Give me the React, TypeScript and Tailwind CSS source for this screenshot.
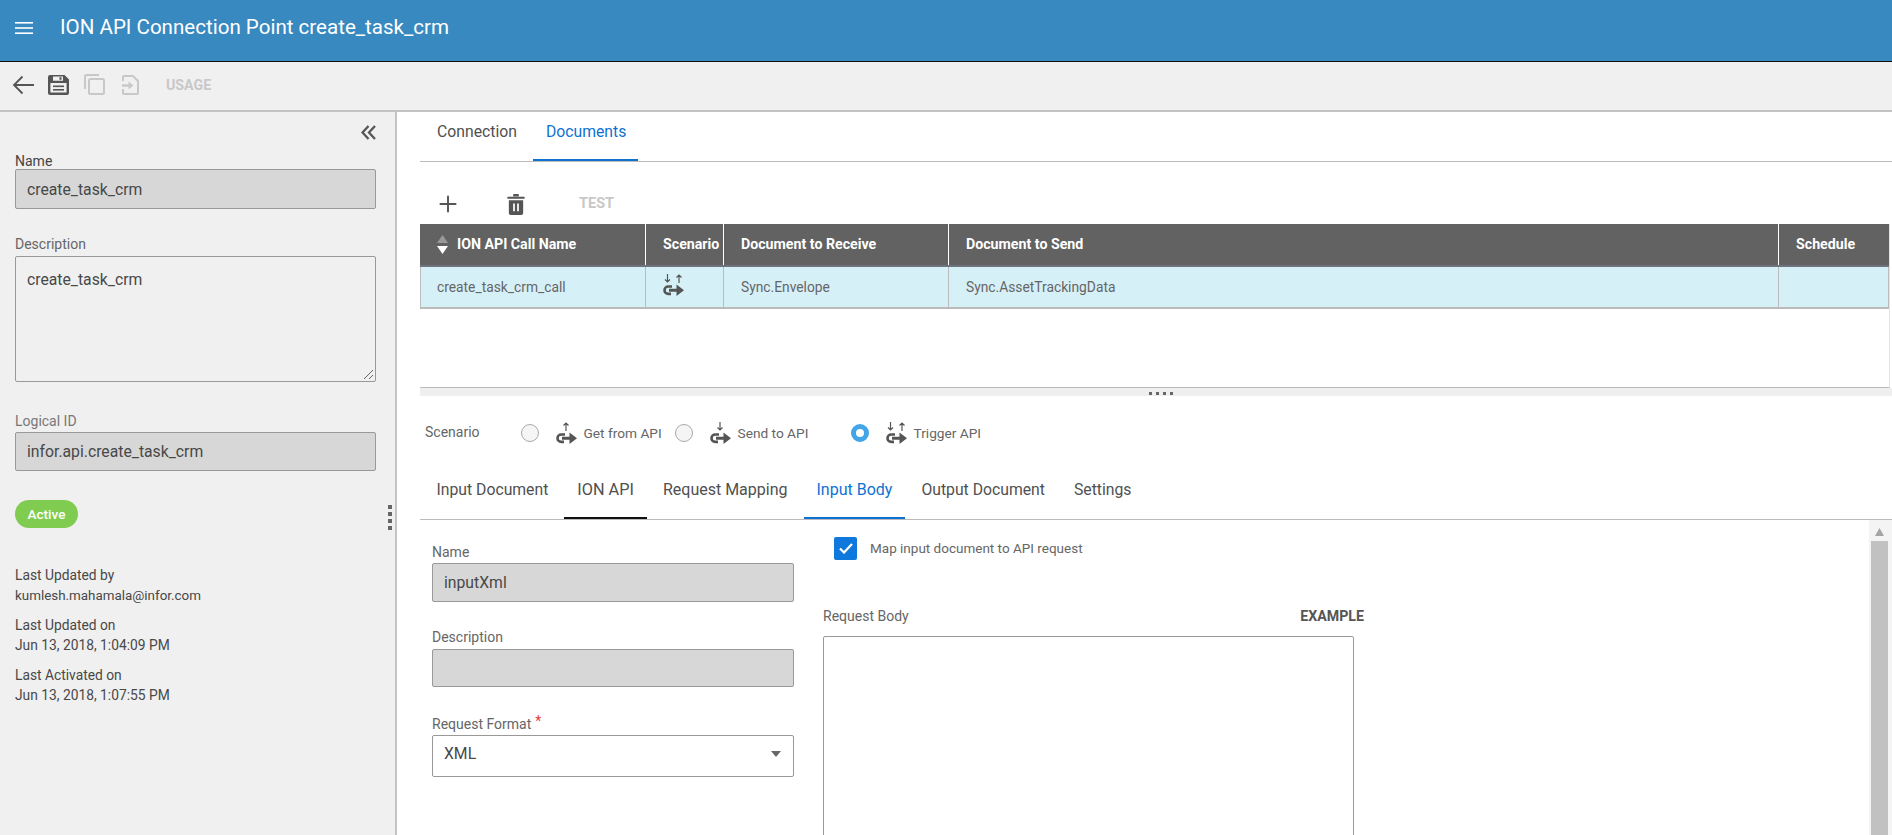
import { Plus } from "lucide-react";

const font = "font-['Roboto',sans-serif]";

function MenuIcon() {
	return (
		<svg width="18" height="12" viewBox="0 0 18 12" fill="#fff">
			<rect x="0" y="0" width="18" height="1.6" />
			<rect x="0" y="5.2" width="18" height="1.6" />
			<rect x="0" y="10.4" width="18" height="1.6" />
		</svg>
	);
}

function BackIcon() {
	return (
		<svg width="22" height="20" viewBox="0 0 22 20" fill="none" stroke="#555" strokeWidth="1.8">
			<path d="M22 10H2M10.5 1.5 2 10l8.5 8.5" />
		</svg>
	);
}

function SaveIcon() {
	return (
		<svg width="21" height="20" viewBox="0 0 21 20" fill="none">
			<path
				fillRule="evenodd"
				fill="#555"
				d="M2 0h14.5L21 4.5V18a2 2 0 0 1-2 2H2a2 2 0 0 1-2-2V2a2 2 0 0 1 2-2zM5 1.6v4.2h10V1.6H5zM2.4 8v9.6h16.2V8H2.4z"
			/>
			<rect x="5" y="10.5" width="11" height="1.6" fill="#555" />
			<rect x="5" y="14" width="11" height="1.6" fill="#555" />
			<rect x="11.5" y="2.2" width="2" height="2.6" fill="#555" />
		</svg>
	);
}

function CopyIcon() {
	return (
		<svg width="21" height="21" viewBox="0 0 21 21" fill="none" stroke="#c8c8c8" strokeWidth="2">
			<path d="M1 15V2.5A1.5 1.5 0 0 1 2.5 1H15" />
			<rect x="5" y="5" width="15" height="15" rx="1.5" />
		</svg>
	);
}

function ImportIcon() {
	return (
		<svg width="17" height="20" viewBox="0 0 17 20" fill="none" stroke="#c8c8c8" strokeWidth="2">
			<path d="M1 6V2a1 1 0 0 1 1-1h9l5 5v12a1 1 0 0 1-1 1H2a1 1 0 0 1-1-1v-4" />
			<path d="M0 10.5h7" strokeWidth="2.4" />
			<path d="M6.5 6.5l5 4-5 4z" fill="#c8c8c8" stroke="none" />
		</svg>
	);
}

function CollapseIcon() {
	return (
		<svg width="15" height="15" viewBox="0 0 15 15" fill="none" stroke="#555" strokeWidth="2.3">
			<path d="M7.5 1 1.5 7.5l6 6.5M14 1 8 7.5l6 6.5" />
		</svg>
	);
}

function TrashIcon() {
	return (
		<svg width="18" height="21" viewBox="0 0 18 22" fill="#555">
			<rect x="0" y="3" width="18" height="2" rx="0.5" />
			<rect x="6" y="0" width="6" height="2.5" rx="0.5" />
			<path
				fillRule="evenodd"
				d="M1.5 6.5h15V20a2 2 0 0 1-2 2h-11a2 2 0 0 1-2-2V6.5zM6 10v8h1.8v-8H6zm4.2 0v8H12v-8h-1.8z"
			/>
		</svg>
	);
}

// plug shape with arrow, shared by the three scenario icons
function ScenarioIcon({ mode }: { mode: "get" | "send" | "trigger" }) {
	return (
		<svg width="21" height="22" viewBox="0 0 21 22" fill="none">
			<g stroke="#555" strokeWidth="1.2">
				{mode === "get" && <path d="M10 9V1M7.5 3.5 10 1l2.5 2.5" />}
				{mode === "send" && <path d="M10 0v8M7.5 5.5 10 8l2.5-2.5" />}
				{mode === "trigger" && <path d="M4.5 0v8M2 5.5 4.5 8 7 5.5M16 9V1M13.5 3.5 16 1l2.5 2.5" />}
			</g>
			<path d="M9 12.5H5.2a3.7 3.7 0 0 0 0 7.4H8" stroke="#555" strokeWidth="2.6" />
			<path d="M6 14.7h7.5v-4.2l7.5 5.7-7.5 5.8v-4.3H6z" fill="#555" />
		</svg>
	);
}

function Field({ label, value, labelClass }: { label: string; value: string; labelClass?: string }) {
	return (
		<div className="flex flex-col">
			<label className={`text-[14px] leading-[16px] ${labelClass ?? "text-[#666]"}`}>{label}</label>
			<div className="mt-[3px] flex h-[39px] items-center rounded-[2px] border border-[#999] bg-[#d7d7d7] px-[11px] text-[15.75px] text-[#484848]">
				{value}
			</div>
		</div>
	);
}

function Tab({ label, state, size = "text-[15.75px]" }: { label: string; state?: "active" | "current"; size?: string }) {
	const line =
		state === "active"
			? "border-[#0f72d2] text-[#0f72d2]"
			: state === "current"
				? "border-[#111] text-[#505050]"
				: "border-transparent text-[#505050]";
	return <div className={`mx-[1.5px] flex h-full items-center border-b-[2px] px-[13px] pb-[4px] ${size} ${line}`}>{label}</div>;
}

function Radio({ checked }: { checked?: boolean }) {
	return checked ? (
		<span className="box-border h-[18px] w-[18px] rounded-full border-[5px] border-[#42a5e8] bg-white" />
	) : (
		<span className="box-border h-[18px] w-[18px] rounded-full border border-[#aaa] bg-[#f5f5f5]" />
	);
}

function Scenario({ mode, label, checked, width }: { mode: "get" | "send" | "trigger"; label: string; checked?: boolean; width: string }) {
	return (
		<div className={`flex items-center ${width}`}>
			<Radio checked={checked} />
			<span className="ml-[17px]">
				<ScenarioIcon mode={mode} />
			</span>
			<span className="ml-[7px] whitespace-nowrap text-[13.7px] text-[#666]">{label}</span>
		</div>
	);
}

export default function App() {
	return (
		<div className={`flex h-[835px] w-[1892px] flex-col overflow-hidden bg-white ${font}`}>
			{/* Header */}
			<header className="flex h-[62px] shrink-0 items-center border-b border-b-[#111] bg-[#3889c0] pb-[6px] pl-[15px] text-white">
				<MenuIcon />
				<h1 className="ml-[27px] text-[20.55px] font-normal">ION API Connection Point create_task_crm</h1>
			</header>

			{/* Toolbar */}
			<div className="flex h-[50px] shrink-0 items-center border-b-[2px] border-b-[#c4c4c4] bg-[#f0f0f0] pl-[12px] pb-[3px]">
				<BackIcon />
				<span className="ml-[14px]"><SaveIcon /></span>
				<span className="ml-[15px]"><CopyIcon /></span>
				<span className="ml-[17px]"><ImportIcon /></span>
				<span className="ml-[27px] mt-[2px] text-[14.2px] font-bold text-[#c8c8c8]">USAGE</span>
			</div>

			<div className="flex min-h-0 flex-1">
				{/* Left panel */}
				<aside className="relative flex w-[397px] shrink-0 flex-col border-r-[2px] border-r-[#c4c4c4] bg-[#f0f0f0] pl-[15px] pr-[19px] pt-[12px]">
					<div className="flex h-[17px] justify-end pt-[1px]">
						<CollapseIcon />
					</div>
					<div className="mt-[12px]">
						<label className="block text-[14px] leading-[16px] text-[#444]">Name</label>
						<div className="flex h-[40px] items-center rounded-[2px] border border-[#999] bg-[#d7d7d7] px-[11px] pt-[1px] text-[15.75px] text-[#484848]">
							create_task_crm
						</div>
					</div>
					<label className="mt-[27px] block text-[14px] leading-[16px] text-[#666]">Description</label>
					<div className="relative mt-[4px] h-[126px] rounded-[2px] border border-[#999] bg-[#f0f0f0] px-[11px] pt-[13px] text-[15.75px] leading-[20px] text-[#484848]">
						create_task_crm
						<svg className="absolute bottom-[2px] right-[2px]" width="9" height="9" viewBox="0 0 9 9" stroke="#666" strokeWidth="1">
							<path d="M0 9 9 0M5 9l4-4" />
						</svg>
					</div>
					<div className="mt-[31px]">
						<Field label="Logical ID" value="infor.api.create_task_crm" labelClass="text-[#777]" />
					</div>
					<span className="mt-[29px] flex h-[28px] w-[63px] items-center justify-center rounded-full bg-[#7fcc50] text-[13.5px] font-medium text-white">
						Active
					</span>
					<div className="absolute right-[3px] top-[393px] flex flex-col gap-[3.5px]">
						<span className="h-[3.5px] w-[4px] bg-[#666]" />
						<span className="h-[3.5px] w-[4px] bg-[#666]" />
						<span className="h-[3.5px] w-[4px] bg-[#666]" />
						<span className="h-[3.5px] w-[4px] bg-[#666]" />
					</div>
					<div className="mt-[38px] flex flex-col gap-[11px] text-[13.8px] leading-[19.5px] text-[#484848]">
						<div>
							<div>Last Updated by</div>
							<div className="text-[13.4px]">kumlesh.mahamala@infor.com</div>
						</div>
						<div>
							<div>Last Updated on</div>
							<div>Jun 13, 2018, 1:04:09 PM</div>
						</div>
						<div>
							<div>Last Activated on</div>
							<div>Jun 13, 2018, 1:07:55 PM</div>
						</div>
					</div>
				</aside>

				{/* Right panel */}
				<main className="flex min-w-0 flex-1 flex-col">
					<div className="ml-[23px] flex h-[50px] shrink-0 items-stretch border-b border-b-[#bbb] pl-[4px]">
						<div className="flex h-full items-center pb-[9px] pl-[13px] pr-[16px] text-[15.75px] text-[#505050]">Connection</div>
						<div className="flex h-full items-center border-b-[2px] border-[#0f72d2] pb-[8px] pl-[13px] pr-[12px] text-[15.75px] text-[#0f72d2]">Documents</div>
					</div>

					<div className="ml-[23px] flex h-[62px] shrink-0 items-center pl-[15px] pt-[22px]">
						<Plus size={26} strokeWidth={1.8} className="text-[#555]" />
						<span className="ml-[46px]"><TrashIcon /></span>
						<span className="ml-[54px] text-[14.5px] font-bold text-[#c8c8c8]">TEST</span>
					</div>

					{/* Table */}
					<div className="ml-[23px] mr-[2px] h-[164px] shrink-0 border-b border-r border-b-[#bbb] border-r-[#e5e5e5]">
						<div className="flex h-[43px] items-center border-b-[2px] border-b-[#6c7480] bg-[#626262] text-[14.2px] font-bold text-white">
							<div className="flex h-full w-[226px] items-center border-r border-r-white pl-[17px]">
								<svg width="11" height="19" viewBox="0 0 11 19" className="mr-[9px]">
									<path d="M5.5 0 11 8H0z" fill="#999" />
									<path d="M5.5 19 11 11H0z" fill="#fff" />
								</svg>
								ION API Call Name
							</div>
							<div className="flex h-full w-[78px] items-center border-r border-r-white pl-[17px]">Scenario</div>
							<div className="flex h-full w-[225px] items-center border-r border-r-white pl-[17px]">Document to Receive</div>
							<div className="flex h-full w-[830px] items-center border-r border-r-white pl-[17px]">Document to Send</div>
							<div className="flex h-full flex-1 items-center pl-[17px]">Schedule</div>
						</div>
						<div className="flex h-[42px] items-center border-x border-b-[2px] border-x-[#bbb] border-b-[#bbb] bg-[#d6f0f8] text-[13.8px] text-[#666]">
							<div className="flex h-full w-[225px] items-center border-r border-r-[#bbb] pl-[16px]">create_task_crm_call</div>
							<div className="flex h-full w-[78px] items-center border-r border-r-[#bbb] pl-[17px] pb-[4px]"><ScenarioIcon mode="trigger" /></div>
							<div className="flex h-full w-[225px] items-center border-r border-r-[#bbb] pl-[17px]">Sync.Envelope</div>
							<div className="flex h-full w-[830px] items-center border-r border-r-[#bbb] pl-[17px]">Sync.AssetTrackingData</div>
							<div className="h-full flex-1" />
						</div>
					</div>

					{/* Splitter */}
					<div className="ml-[23px] flex h-[8px] shrink-0 items-center justify-center gap-[4px] bg-[#efefef] pl-[10px] pt-[3px]">
						<span className="h-[3px] w-[3px] bg-[#666]" />
						<span className="h-[3px] w-[3px] bg-[#666]" />
						<span className="h-[3px] w-[3px] bg-[#666]" />
						<span className="h-[3px] w-[3px] bg-[#666]" />
					</div>

					{/* Scenario */}
					<div className="ml-[23px] flex h-[71px] shrink-0 items-start pl-[5px] pt-[26px] text-[14px] text-[#666]">
						<span className="w-[95.5px]">Scenario</span>
						<Scenario mode="get" label="Get from API" width="w-[154px]" />
						<Scenario mode="send" label="Send to API" width="w-[176px]" />
						<Scenario mode="trigger" label="Trigger API" checked width="w-[140px]" />
					</div>

					{/* Inner tabs */}
					<div className="ml-[23px] flex h-[53px] shrink-0 items-stretch border-b border-b-[#bbb] pl-[2px]">
						<Tab label="Input Document" />
						<Tab label="ION API" state="current" size="text-[16.3px]" />
						<Tab label="Request Mapping" size="text-[16px]" />
						<Tab label="Input Body" state="active" size="text-[16px]" />
						<Tab label="Output Document" />
						<Tab label="Settings" />
					</div>

					{/* Form area */}
					<div className="ml-[23px] flex min-h-0 flex-1 overflow-hidden">
						<div className="flex w-[403px] shrink-0 flex-col pl-[12px] pt-[24px]">
							<div className="w-[362px]">
								<Field label="Name" value="inputXml" />
							</div>
							<div className="mt-[27px] w-[362px]">
								<label className="block text-[14px] leading-[16px] text-[#666]">Description</label>
								<div className="mt-[4px] h-[38px] rounded-[2px] border border-[#999] bg-[#d7d7d7]" />
							</div>
							<div className="mt-[29px] w-[362px]">
								<label className="flex text-[14px] leading-[16px] text-[#666]">
									Request Format<span className="ml-[4px] -mt-[3px] text-[#e53935]">*</span>
								</label>
								<div className="mt-[3px] flex h-[42px] items-center justify-between rounded-[2px] border border-[#999] bg-white pb-[4px] pl-[11px] pr-[12px] text-[15.75px] text-[#484848]">
									XML
									<svg width="10" height="6" viewBox="0 0 10 6"><path d="M0 0h10L5 6z" fill="#666" /></svg>
								</div>
							</div>
						</div>

						<div className="flex w-[542px] shrink-0 flex-col pt-[17px]">
							<div className="ml-[11px] flex items-center">
								<span className="flex h-[23px] w-[23px] items-center justify-center rounded-[2px] bg-[#0f78dc]">
									<svg width="14" height="11" viewBox="0 0 14 11" fill="none" stroke="#fff" strokeWidth="2.2"><path d="M1 5.5 5 9.5 13 1" /></svg>
								</span>
								<span className="ml-[13px] text-[13.5px] text-[#666]">Map input document to API request</span>
							</div>
							<div className="mt-[46px] flex w-[541px] items-center justify-between text-[14px]">
								<span className="text-[#666]">Request Body</span>
								<span className="text-[14.2px] font-bold text-[#555]">EXAMPLE</span>
							</div>
							<div className="mt-[9px] h-[400px] w-[531px] shrink-0 rounded-[2px] border border-[#999] bg-white" />
						</div>

						{/* Scrollbar */}
						<div className="ml-auto flex w-[23px] shrink-0 flex-col bg-[#f4f4f4] pl-[2px]">
							<div className="flex h-[21px] w-[17px] items-center justify-center pt-[2px]">
								<svg width="9" height="8" viewBox="0 0 9 8"><path d="M4.5 0 9 8H0z" fill="#a5a5a5" /></svg>
							</div>
							<div className="w-[17px] flex-1 bg-[#c1c1c1]" />
						</div>
					</div>
				</main>
			</div>
		</div>
	);
}
